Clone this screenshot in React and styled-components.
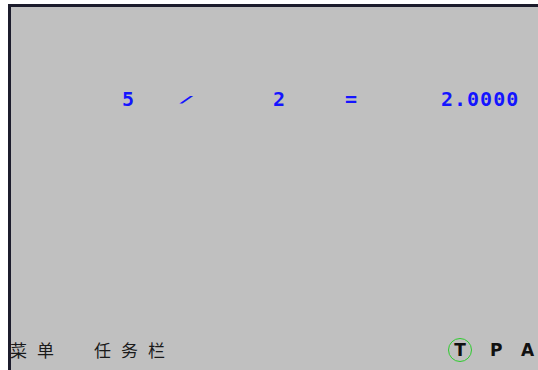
import styled, { createGlobalStyle } from 'styled-components';

const Global = createGlobalStyle`
  html, body {
    margin: 0;
    padding: 0;
    background: #fff;
    width: 538px;
    height: 370px;
    overflow: hidden;
  }
`;

const Frame = styled.div`
  width: 538px;
  height: 370px;
  box-sizing: border-box;
  padding: 4px 0 0 8px;
  background: #fff;
`;

const Screen = styled.div`
  height: 100%;
  box-sizing: border-box;
  background: #c0c0c0;
  border-top: 3px solid #1c1c2c;
  border-left: 3px solid #1c1c2c;
  display: flex;
  flex-direction: column;
`;

const Equation = styled.div`
  display: grid;
  grid-template-columns: 58px 93px 72px 96px auto;
  padding: 80px 0 0 111px;
  font-family: "DejaVu Sans Mono", "Liberation Mono", monospace;
  font-weight: bold;
  font-size: 20px;
  letter-spacing: 1px;
  color: #1414ff;
`;

const Term = styled.span`
  line-height: 24px;
  ${p => p.$slash && `
    display: inline-block;
    width: 14px;
    text-align: center;
    transform: translateY(1px) scale(1.4, 0.45);
  `}
`;

const Spacer = styled.div`
  flex: 1;
`;

const TaskBar = styled.div`
  display: flex;
  align-items: center;
  height: 33px;
  padding: 0 0 4px 0;
  margin-left: -1px;
`;

const Label = styled.span`
  font-family: "Noto Sans CJK SC", sans-serif;
  font-size: 17px;
  letter-spacing: 10px;
  color: #1a1a1a;
  margin-right: ${p => p.$gap || 0}px;
`;

const Modes = styled.div`
  margin-left: auto;
  display: flex;
  align-items: center;
  padding-right: 5px;
`;

const Mode = styled.span`
  position: relative;
  font-family: "DejaVu Sans", "Liberation Sans", sans-serif;
  font-weight: bold;
  font-size: 17px;
  color: #111;
  width: 12px;
  text-align: center;
  margin-right: ${p => p.$gap || 0}px;
  ${p => p.$active && `
    &::before {
      content: "";
      position: absolute;
      left: 50%;
      top: 50%;
      width: 22px;
      height: 22px;
      margin: -12px 0 0 -12px;
      border: 1px solid #2ecc2e;
      border-radius: 50%;
    }
  `}
`;

export default function App() {
  return (
    <Frame>
      <Global />
      <Screen>
        <Equation>
          <Term>5</Term>
          <Term $slash>/</Term>
          <Term>2</Term>
          <Term>=</Term>
          <Term>2.0000</Term>
        </Equation>
        <Spacer />
        <TaskBar>
          <Label $gap={30}>菜单</Label>
          <Label>任务栏</Label>
          <Modes>
            <Mode $active $gap={24}>T</Mode>
            <Mode $gap={19}>P</Mode>
            <Mode>A</Mode>
          </Modes>
        </TaskBar>
      </Screen>
    </Frame>
  );
}
